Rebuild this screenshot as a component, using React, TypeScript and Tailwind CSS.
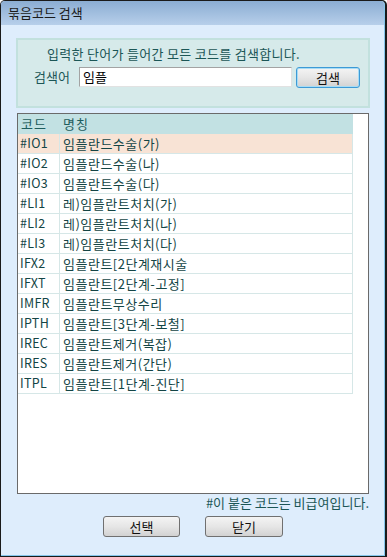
import React from "react";

const rows: { code: string; name: string }[] = [
  { code: "#IO1", name: "임플란드수술(가)" },
  { code: "#IO2", name: "임플란드수술(나)" },
  { code: "#IO3", name: "임플란트수술(다)" },
  { code: "#LI1", name: "레)임플란트처치(가)" },
  { code: "#LI2", name: "레)임플란트처치(나)" },
  { code: "#LI3", name: "레)임플란트처치(다)" },
  { code: "IFX2", name: "임플란트[2단계재시술" },
  { code: "IFXT", name: "임플란트[2단계-고정]" },
  { code: "IMFR", name: "임플란트무상수리" },
  { code: "IPTH", name: "임플란트[3단계-보철]" },
  { code: "IREC", name: "임플란트제거(복잡)" },
  { code: "IRES", name: "임플란트제거(간단)" },
  { code: "ITPL", name: "임플란트[1단계-진단]" },
];

const font = { fontFamily: '"Noto Sans CJK KR", "Noto Sans", sans-serif' };

function WinButton({ label, focused }: { label: string; focused?: boolean }) {
  return (
    <button
      className={
        "w-full h-[21px] rounded-[3px] bg-gradient-to-b from-[#f4f4f4] via-[#e6e6e6] to-[#d2d2d2] text-[13px] leading-none text-[#111] flex items-center justify-center " +
        (focused ? "border border-[#3d9ad6] shadow-[inset_0_0_0_1px_#a6dcf5]" : "border border-[#707070]")
      }
    >
      {label}
    </button>
  );
}

export default function App() {
  return (
    <div
      style={font}
      className="w-[387px] h-[557px] flex flex-col bg-[#1a1a1a] rounded-t-[5px] overflow-hidden pl-[1px] pr-[2px] pt-[1px] pb-[1px]"
    >
      <div className="flex-1 flex flex-col bg-[#deedfc] border-r border-b border-[#84c6ea] rounded-t-[4px] overflow-hidden">
        {/* title bar */}
        <div className="h-[24px] shrink-0 bg-gradient-to-b from-[#8badd3] to-[#b7cfea] flex items-center pl-[7px] text-[13px] text-[#1a1a1a]">
          묶음코드 검색
        </div>

        {/* search panel */}
        <div className="mt-[13px] ml-[15px] w-[354px] h-[70px] border-2 border-[#c2e1de] bg-[#d6eaea] flex flex-col text-[13px] text-[#1b5656]">
          <div className="pl-[29px] pt-[6px] h-[26px] leading-[16px] tracking-[0.3px]">입력한 단어가 들어간 모든 코드를 검색합니다.</div>
          <div className="flex items-center h-[22px]">
            <span className="pl-[16px] w-[61px]">검색어</span>
            <div className="w-[213px] h-[20px] bg-white border-t border-l border-[#a3a3a3] border-r border-b border-r-[#e2e2e2] border-b-[#e2e2e2] flex items-center pl-[3px] text-[#000]">
              임플
            </div>
            <div className="ml-[4px] w-[64px]">
              <WinButton label="검색" focused />
            </div>
          </div>
        </div>

        {/* list */}
        <div className="mt-[5px] ml-[16px] w-[352px] h-[381px] border border-[#6a6a6a] bg-white text-[13px] text-[#134545]">
          <div className="w-[335px]">
            <div className="flex h-[20px] bg-[#c2e1e3] items-center text-[#1e5d5d]">
              <span className="w-[42px] pl-[3px] tracking-[1px]">코드</span>
              <span className="pl-[3px] tracking-[1px]">명칭</span>
            </div>
            {rows.map((r, i) => (
              <div
                key={r.code}
                className={
                  "flex h-[20px] border-b border-r border-[#d6e7e7] " + (i === 0 ? "bg-[#f8e3d5]" : "bg-white")
                }
              >
                <span className="w-[42px] pl-[2px] border-r border-[#d6e7e7] flex items-center text-[12.5px] tracking-[0.3px]">
                  {r.code}
                </span>
                <span className="pl-[3px] flex items-center whitespace-nowrap tracking-[0.5px]">{r.name}</span>
              </div>
            ))}
          </div>
        </div>

        {/* footer */}
        <div className="mt-[1px] w-[368px] text-right text-[13px] leading-[16px] text-[#1b5656]">
          #이 붙은 코드는 비급여입니다.
        </div>
        <div className="mt-[5px] flex pl-[102px] gap-[25px]">
          <div className="w-[77px]">
            <WinButton label="선택" />
          </div>
          <div className="w-[78px]">
            <WinButton label="닫기" />
          </div>
        </div>
      </div>
    </div>
  );
}
